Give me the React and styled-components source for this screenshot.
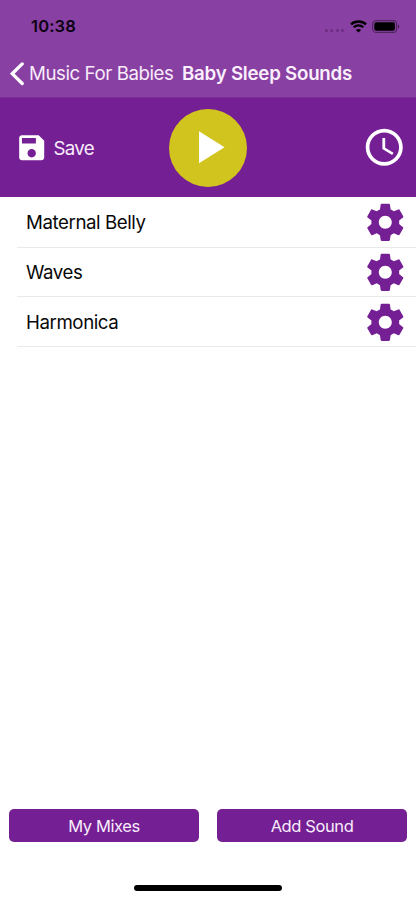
import React from 'react'
import styled, { createGlobalStyle } from 'styled-components'

const sounds = ['Maternal Belly', 'Waves', 'Harmonica']

function App() {
  return (
    <Screen>
      <GlobalStyle />
      <Header>
        <StatusBar>
          <Time>10:38</Time>
          <StatusIcons>
            <Signal>
              <i /><i /><i /><i />
            </Signal>
            <WifiIcon />
            <BatteryIcon />
          </StatusIcons>
        </StatusBar>
        <NavBar>
          <BackButton>
            <svg width="14" height="24" viewBox="0 0 14 24">
              <path d="M12.2 1.9L2.2 11.7L12.2 21.5" fill="none" stroke="currentColor" strokeWidth="3.3" strokeLinecap="round" strokeLinejoin="miter" />
            </svg>
            <span>Music For Babies</span>
          </BackButton>
          <NavTitle>Baby Sleep Sounds</NavTitle>
        </NavBar>
      </Header>

      <Player>
        <SaveButton>
          <svg width="33.4" height="33.4" viewBox="0 0 24 24" fill="currentColor">
            <path d="M17 3H5c-1.11 0-2 .9-2 2v14c0 1.1.89 2 2 2h14c1.1 0 2-.9 2-2V7l-4-4zm-5 16c-1.66 0-3-1.34-3-3s1.34-3 3-3 3 1.34 3 3-1.34 3-3 3zm3-10H5V5h10v4z" />
          </svg>
          <span>Save</span>
        </SaveButton>
        <PlayButton aria-label="Play">
          <svg width="26" height="33" viewBox="0 0 26 33">
            <path d="M0 0.3L25.5 16.3L0 32.3z" fill="currentColor" />
          </svg>
        </PlayButton>
        <TimerButton aria-label="Timer">
          <svg width="44.5" height="44.5" viewBox="0 0 24 24" fill="currentColor">
            <path d="M11.99 2C6.47 2 2 6.48 2 12s4.47 10 9.99 10C17.52 22 22 17.52 22 12S17.52 2 11.99 2zM12 20c-4.42 0-8-3.58-8-8s3.58-8 8-8 8 3.58 8 8-3.58 8-8 8z" />
            <path d="M12.5 7H11v6l5.25 3.15.75-1.23-4.5-2.67z" />
          </svg>
        </TimerButton>
      </Player>

      <SoundList>
        {sounds.map((name) => (
          <SoundRow key={name}>
            <span>{name}</span>
            <GearIcon />
          </SoundRow>
        ))}
      </SoundList>

      <Footer>
        <FooterButton>My Mixes</FooterButton>
        <FooterButton>Add Sound</FooterButton>
      </Footer>
      <HomeIndicator />
    </Screen>
  )
}

function WifiIcon() {
  return (
    <svg width="17" height="13" viewBox="0 0 17 13" fill="none" stroke="#000">
      <path d="M1 4.4C5.1 0.5 11.9 0.5 16 4.4" strokeWidth="2.4" />
      <path d="M3.7 7.3C6.4 4.8 10.6 4.8 13.3 7.3" strokeWidth="2.2" />
      <path d="M8.5 12.6L5.9 9.9C7.4 8.6 9.6 8.6 11.1 9.9z" fill="#000" stroke="none" />
    </svg>
  )
}

function BatteryIcon() {
  return (
    <svg width="28" height="13" viewBox="0 0 28 13">
      <rect x="0.6" y="0.6" width="24" height="11.8" rx="3.4" fill="none" stroke="#000" strokeOpacity="0.42" strokeWidth="1.1" />
      <rect x="2.3" y="2.3" width="20.6" height="8.4" rx="1.8" fill="#000" />
      <path d="M25.9 4.4c.9.3 1.3 1.1 1.3 2.1s-.4 1.8-1.3 2.1z" fill="#000" fillOpacity="0.5" />
    </svg>
  )
}

function GearIcon() {
  return (
    <svg width="44.6" height="44.6" viewBox="0 0 24 24" fill="#751f95">
      <path d="M19.43 12.98c.04-.32.07-.64.07-.98s-.03-.66-.07-.98l2.11-1.65c.19-.15.24-.42.12-.64l-2-3.46c-.12-.22-.39-.3-.61-.22l-2.49 1c-.52-.4-1.08-.73-1.69-.98l-.38-2.65C14.46 2.18 14.25 2 14 2h-4c-.25 0-.46.18-.49.42l-.38 2.65c-.61.25-1.17.59-1.69.98l-2.49-1c-.23-.09-.49 0-.61.22l-2 3.46c-.13.22-.07.49.12.64l2.11 1.65c-.04.32-.07.65-.07.98s.03.66.07.98l-2.11 1.65c-.19.15-.24.42-.12.64l2 3.46c.12.22.39.3.61.22l2.49-1c.52.4 1.08.73 1.69.98l.38 2.65c.03.24.24.42.49.42h4c.25 0 .46-.18.49-.42l.38-2.65c.61-.25 1.17-.59 1.69-.98l2.49 1c.23.09.49 0 .61-.22l2-3.46c.12-.22.07-.49-.12-.64l-2.11-1.65zM12 15.5c-1.93 0-3.5-1.57-3.5-3.5s1.57-3.5 3.5-3.5 3.5 1.57 3.5 3.5-1.57 3.5-3.5 3.5z" />
    </svg>
  )
}

const GlobalStyle = createGlobalStyle`
  * {
    box-sizing: border-box;
  }
  body {
    margin: 0;
    background: #ffffff;
    font-family: Inter, "Liberation Sans", sans-serif;
  }
  button {
    padding: 0;
    border: none;
    background: none;
    color: inherit;
    font: inherit;
  }
  svg {
    display: block;
    flex-shrink: 0;
  }
`;

const Screen = styled.div`
  display: flex;
  flex-direction: column;
  width: 100%;
  height: 900px;
  overflow: hidden;
  background-color: #ffffff;
`;

const Header = styled.div`
  height: 98px;
  background-color: #8840a2;
  border-bottom: 1px solid #7c2c99;
`;

const StatusBar = styled.div`
  display: flex;
  align-items: center;
  justify-content: space-between;
  height: 49px;
  padding: 3px 16px 0 31px;
`;

const Time = styled.span`
  font-size: 16.5px;
  font-weight: 600;
  letter-spacing: 0.15px;
  color: #0c0212;
`;

const StatusIcons = styled.div`
  display: flex;
  align-items: center;
`;

const Signal = styled.div`
  display: flex;
  gap: 2.3px;
  margin: 9px 6px 0 0;

  i {
    width: 3px;
    height: 3px;
    border-radius: 50%;
    background-color: #6b2e82;
  }

  & + svg {
    margin-right: 5px;
  }
`;

const NavBar = styled.div`
  display: flex;
  align-items: center;
  height: 49px;
  padding-left: 10px;
  color: #ffffff;
`;

const BackButton = styled.button`
  display: flex;
  align-items: center;
  gap: 5px;
  width: 172px;
  white-space: nowrap;
  font-size: 18.7px;
  letter-spacing: -0.44px;
  color: #f8ecfb;

  svg {
    color: #ffffff;
  }
`;

const NavTitle = styled.h1`
  margin: 0;
  font-size: 18.7px;
  font-weight: 600;
  letter-spacing: -0.23px;
  white-space: nowrap;
  color: #fbeffe;
`;

const Player = styled.div`
  display: grid;
  grid-template-columns: 1fr auto 1fr;
  align-items: center;
  height: 99px;
  padding: 0 9px;
  background-color: #751f95;
  color: #ffffff;
`;

const SaveButton = styled.button`
  display: flex;
  align-items: center;
  gap: 5px;
  margin-left: 6px;
  font-size: 18.7px;
  letter-spacing: -0.7px;
  color: #ffffff;

  span {
    padding-top: 2px;
    color: #f8ecfb;
  }
`;

const PlayButton = styled.button`
  display: flex;
  align-items: center;
  width: 78px;
  height: 78px;
  padding-left: 30px;
  border-radius: 50%;
  background-color: #d2c41f;
`;

const TimerButton = styled.button`
  justify-self: end;
  margin-right: 0.2px;
`;

const SoundList = styled.ul`
  flex: 1;
  margin: 0;
  padding: 0 0 0 17px;
  list-style: none;
`;

const SoundRow = styled.li`
  display: flex;
  align-items: center;
  justify-content: space-between;
  height: 49.6px;
  padding: 1px 8.7px 0 9px;
  border-bottom: 1px solid #e9e9ea;
  font-size: 18.7px;
  letter-spacing: -0.43px;
  color: #080808;

  &:first-child {
    height: 50.8px;
  }
`;

const Footer = styled.div`
  display: grid;
  grid-template-columns: 1fr 1fr;
  gap: 18px;
  padding: 0 9px;
`;

const FooterButton = styled.button`
  height: 33px;
  border-radius: 5px;
  background-color: #751f95;
  font-size: 16.5px;
  letter-spacing: -0.4px;
  color: #f8ecfb;
`;

const HomeIndicator = styled.div`
  width: 148px;
  height: 6px;
  margin: 43px auto 9px;
  border-radius: 3px;
  background-color: #000000;
`;

export default App
